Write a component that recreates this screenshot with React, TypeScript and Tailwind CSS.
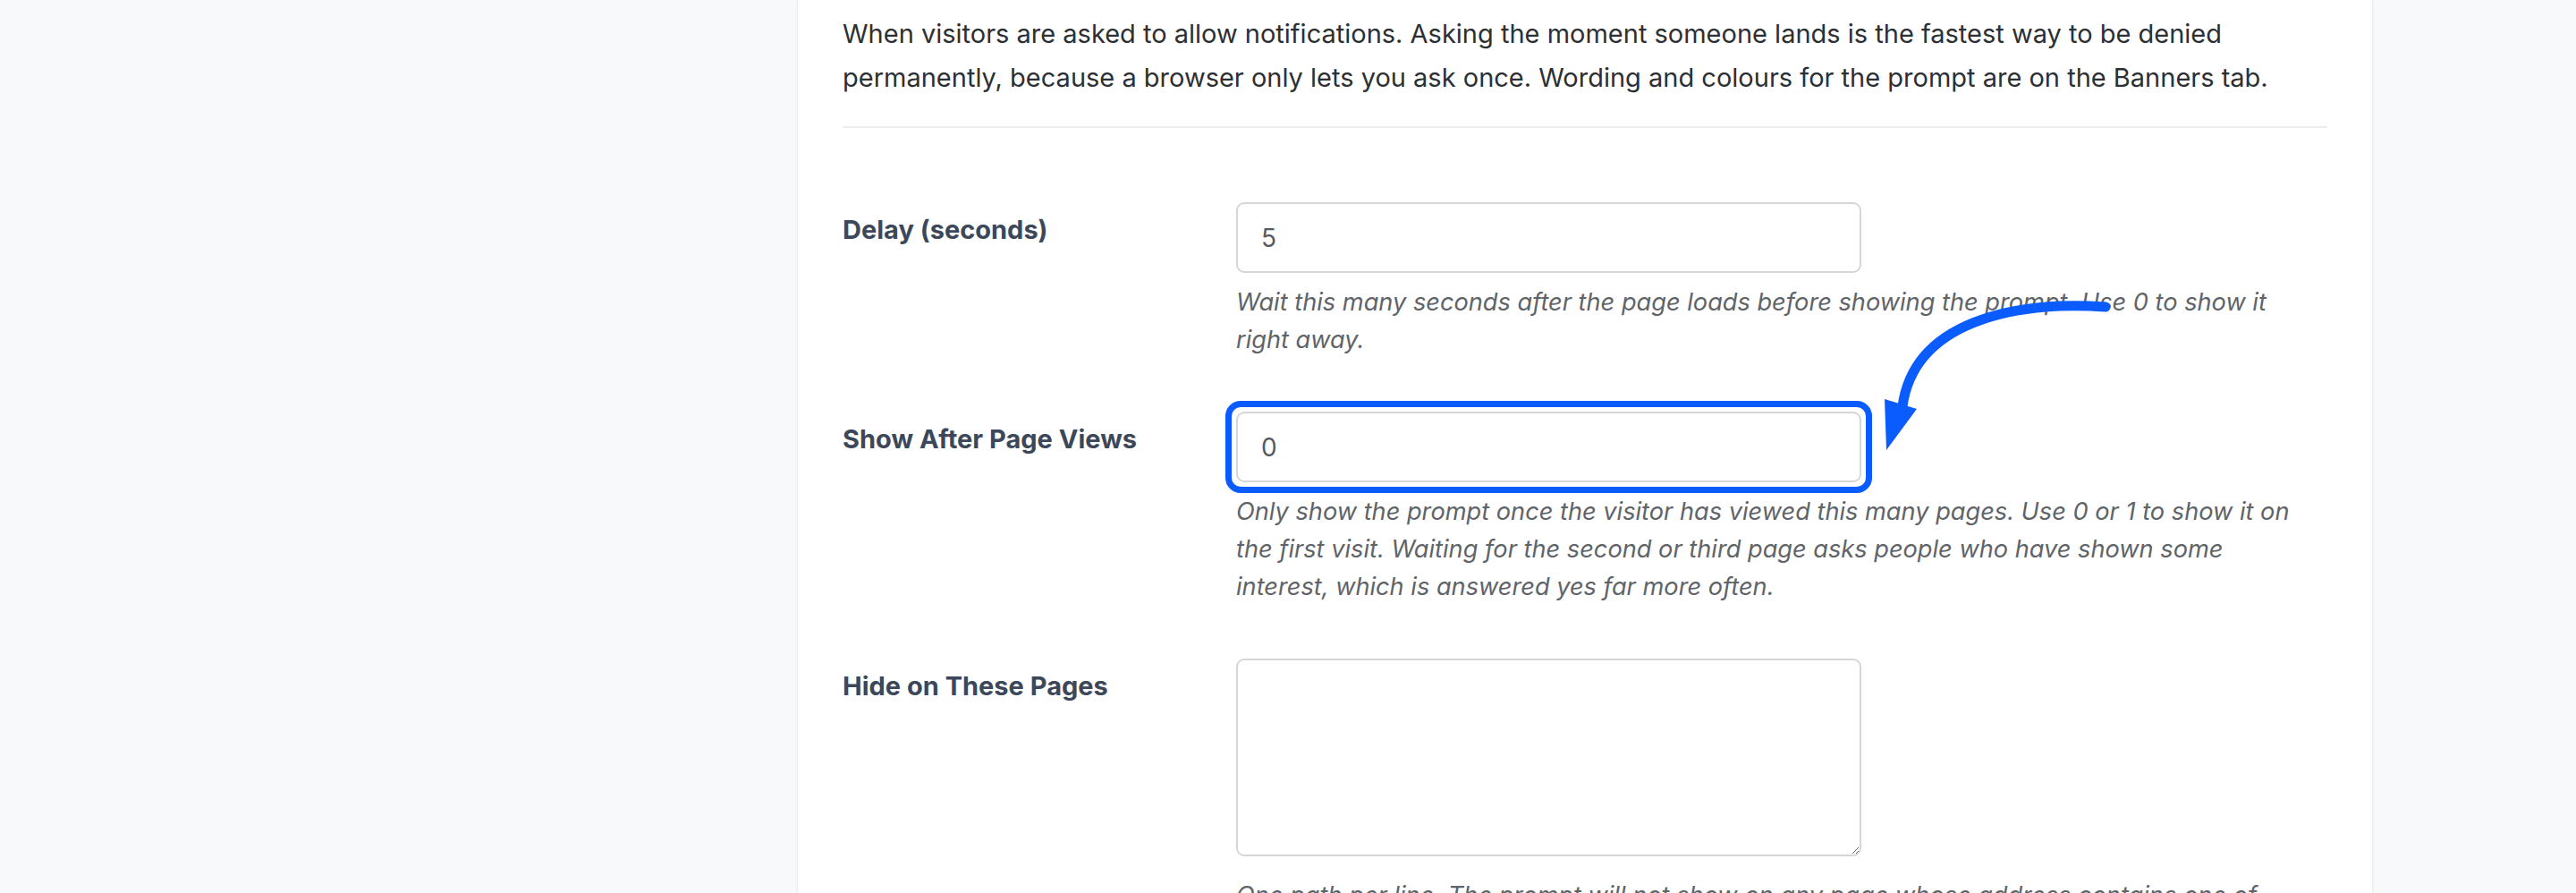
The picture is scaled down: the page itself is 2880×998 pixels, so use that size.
import React from "react";

const helpCls =
  "mt-[12px] text-[27.2px] leading-[42px] italic text-[#5f6469] font-['Inter',sans-serif]";
const labelCls =
  "mt-[11px] text-[29px] leading-[40px] font-bold text-[#3c4859] font-['Inter',sans-serif]";
const inputCls =
  "block w-[699px] h-[79px] rounded-[9px] border-2 border-[#d6d6d6] bg-white px-[26px] text-[28px] text-[#555a60] font-['Inter',sans-serif] outline-none";

export default function App() {
  return (
    <div className="relative w-[2880px] h-[998px] overflow-hidden bg-[#f8f9fb] font-['Inter',sans-serif]">
      <div className="ml-[891px] w-[1762px] h-[998px] bg-white border-x border-[#eef0f2] shadow-[0_0_4px_rgba(0,0,0,0.04)] px-[50px] pt-[13px]">
        <p className="text-[29px] leading-[49px] text-[#2c3034]">
          When visitors are asked to allow notifications. Asking the moment someone lands is the fastest way to be denied
          <br />
          permanently, because a browser only lets you ask once. Wording and colours for the prompt are on the Banners tab.
        </p>
        <div className="mt-[30px] h-[2px] bg-[#ececee]" />

        <div className="pt-[83px] flex flex-col gap-[59px]">
          <div className="grid grid-cols-[440px_1fr]">
            <div className={labelCls}>Delay (seconds)</div>
            <div>
              <input className={inputCls} defaultValue="5" />
              <p className={helpCls}>
                Wait this many seconds after the page loads before showing the prompt. Use 0 to show it
                <br />
                right away.
              </p>
            </div>
          </div>

          <div className="grid grid-cols-[440px_1fr]">
            <div className={labelCls}>Show After Page Views</div>
            <div>
              <div className="relative w-[699px]">
                <input className={inputCls} defaultValue="0" />
                <span className="pointer-events-none absolute -inset-[12px] rounded-[17px] border-[7px] border-[#0a5cff]" />
              </div>
              <p className={helpCls}>
                Only show the prompt once the visitor has viewed this many pages. Use 0 or 1 to show it on
                <br />
                the first visit. Waiting for the second or third page asks people who have shown some
                <br />
                interest, which is answered yes far more often.
              </p>
            </div>
          </div>

          <div className="grid grid-cols-[440px_1fr]">
            <div className={labelCls}>Hide on These Pages</div>
            <div>
              <textarea className="block w-[699px] h-[221px] rounded-[9px] border-2 border-[#d6d6d6] bg-white px-[26px] py-[16px] text-[28px] text-[#555a60] font-['Inter',sans-serif] outline-none" />
              <p className="mt-[23px] text-[27.2px] leading-[42px] italic text-[#5f6469] font-['Inter',sans-serif]">
                One path per line. The prompt will not show on any page whose address contains one of
                <br />
                them.
              </p>
            </div>
          </div>
        </div>
      </div>

      <svg
        className="pointer-events-none absolute left-[2095px] top-[325px]"
        width="275"
        height="190"
        viewBox="2095 325 275 190"
      >
        <path
          d="M 2354 343 C 2250 336, 2140 360, 2127 454"
          fill="none"
          stroke="#0a5cff"
          strokeWidth="11"
          strokeLinecap="round"
        />
        <polygon points="2107,446 2143,457 2109,503" fill="#0a5cff" />
      </svg>
    </div>
  );
}
